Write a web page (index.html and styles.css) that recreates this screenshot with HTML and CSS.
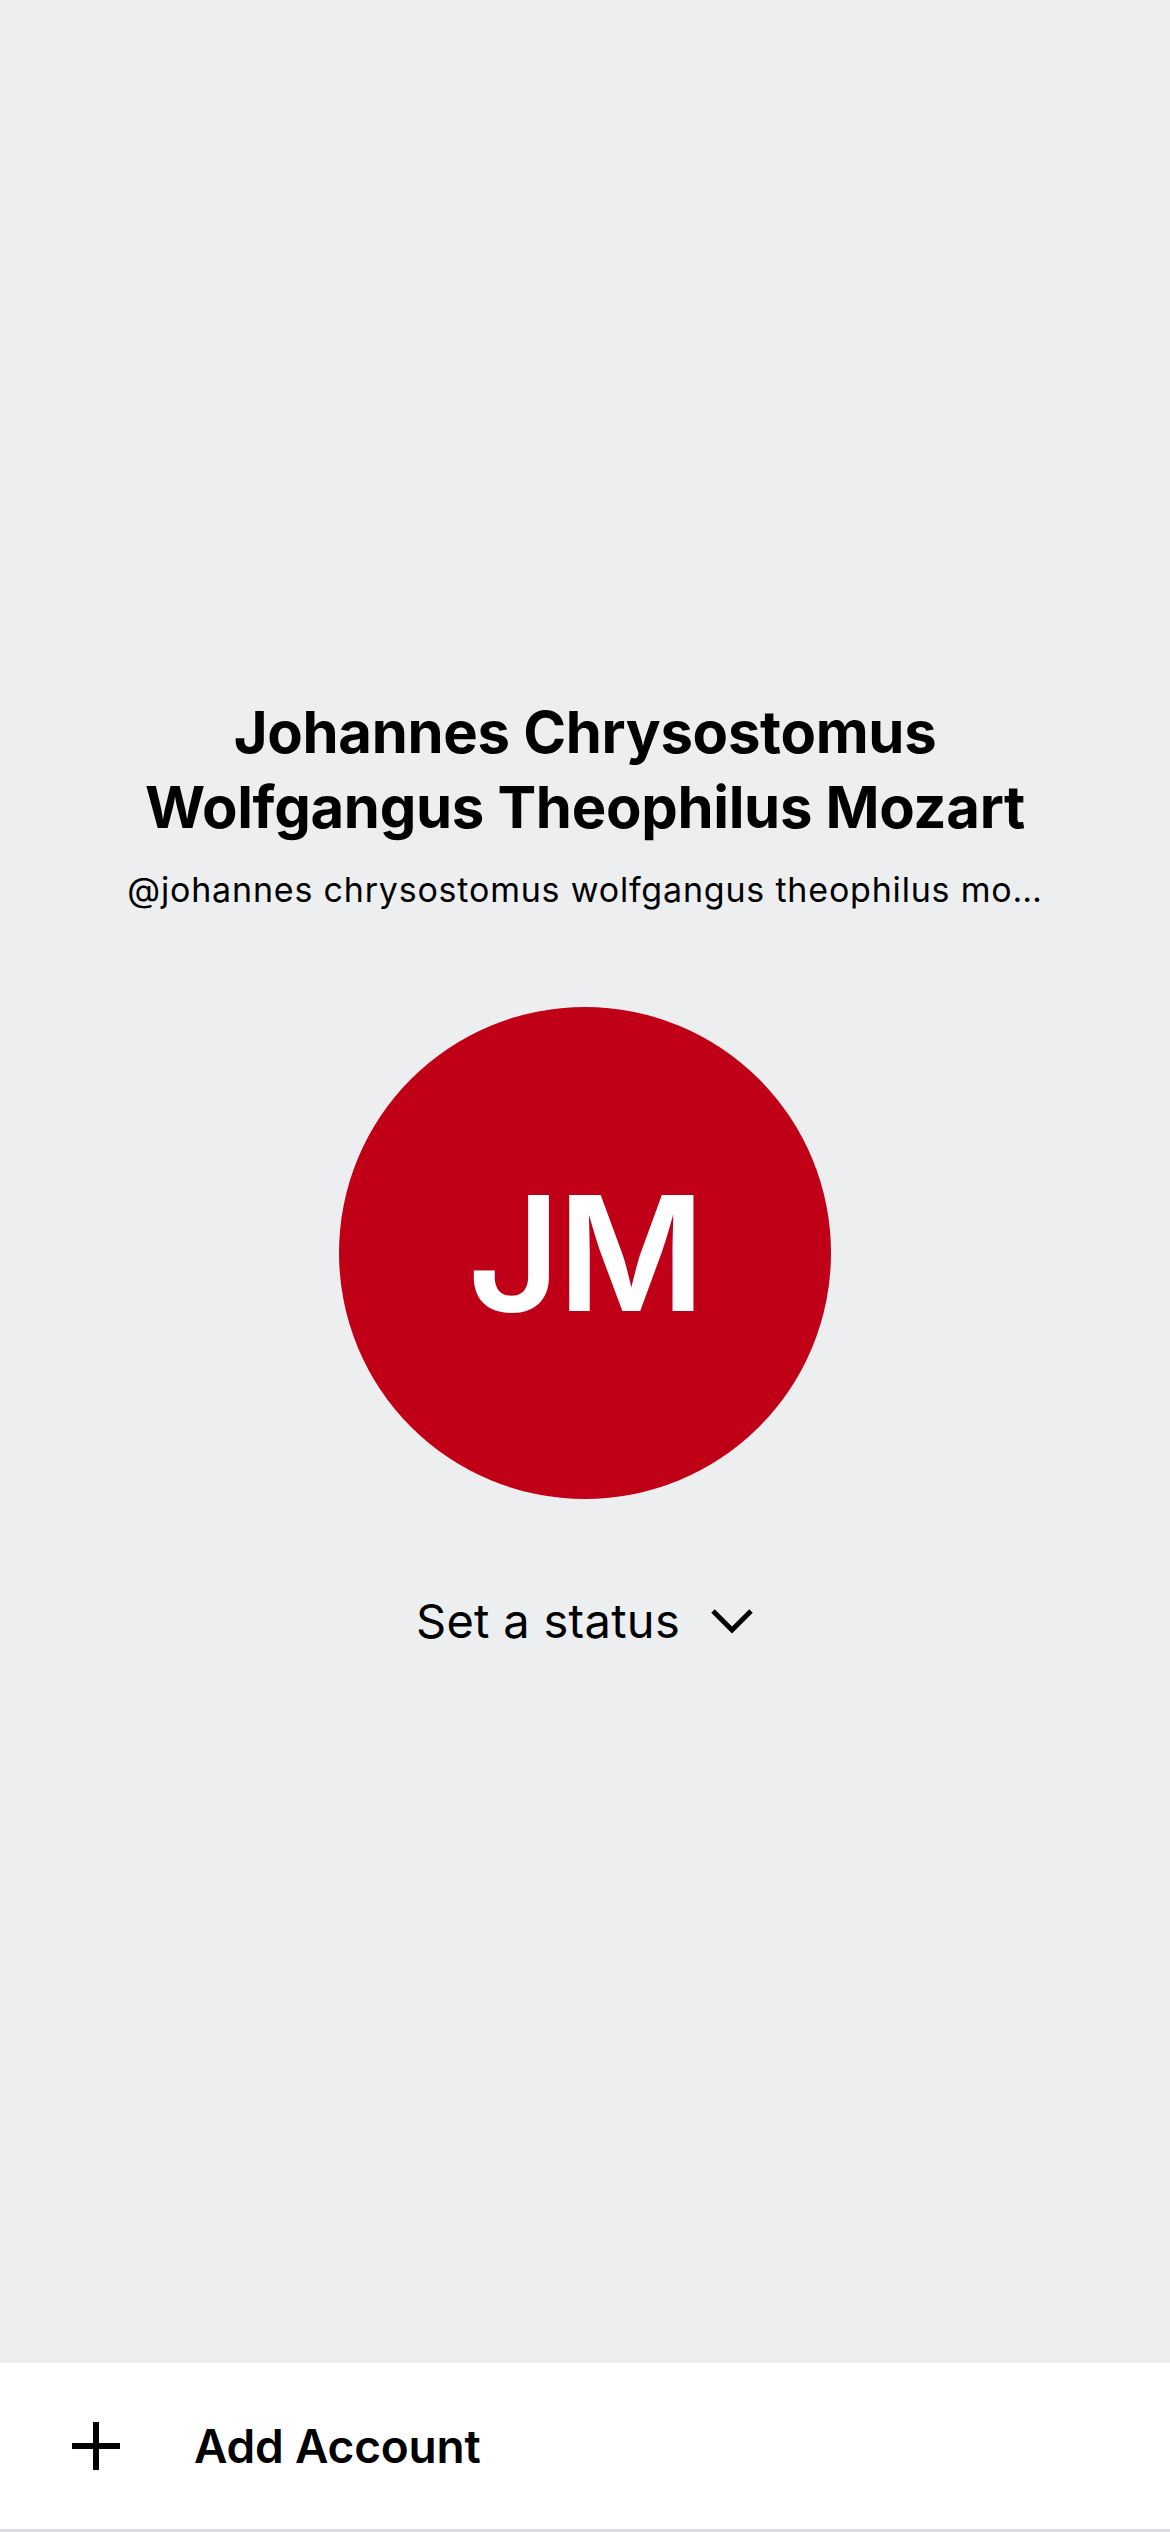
FILE: index.html
```html
<!DOCTYPE html>
<html lang="en">
<head>
<meta charset="utf-8">
<title>Account</title>
<link rel="stylesheet" href="styles.css">
</head>
<body>
<div class="screen">
  <main class="main">
    <h1 class="name">Johannes Chrysostomus<br>Wolfgangus Theophilus Mozart</h1>
    <p class="handle">@johannes chrysostomus wolfgangus theophilus mo…</p>
    <div class="avatar"><span class="initials">JM</span></div>
    <button class="status" type="button">
      <span class="status-text">Set a status</span>
      <svg class="chevron" width="44" height="27" viewBox="0 0 44 27" aria-hidden="true">
        <path d="M3 3 L22 22 L41 3" fill="none" stroke="#000" stroke-width="5" stroke-linecap="butt" stroke-linejoin="miter"/>
      </svg>
    </button>
  </main>
  <div class="account-bar">
    <svg class="plus" width="48" height="48" viewBox="0 0 48 48" aria-hidden="true">
      <path d="M24 0 V48 M0 24 H48" stroke="#000" stroke-width="6"/>
    </svg>
    <span class="add-label">Add Account</span>
  </div>
</div>
</body>
</html>
```

FILE: styles.css
```css
* { box-sizing: border-box; }
html, body {
  margin: 0;
  padding: 0;
}
body {
  background: #edeef0;
  font-family: Inter, "Noto Sans", "Liberation Sans", sans-serif;
  color: #000;
}
.screen {
  width: 1170px;
  height: 2532px;
  display: flex;
  flex-direction: column;
}
.main {
  flex: 1;
  display: flex;
  flex-direction: column;
  align-items: center;
  padding-top: 695px;
}
.name {
  margin: 0;
  font-size: 58px;
  line-height: 75px;
  font-weight: 700;
  text-align: center;
  letter-spacing: -0.3px;
}
.handle {
  margin: 25px 0 0;
  font-size: 34px;
  line-height: 40px;
  font-weight: 400;
  letter-spacing: 0.8px;
  white-space: nowrap;
}
.avatar {
  margin-top: 97px;
  width: 492px;
  height: 492px;
  border-radius: 50%;
  background: #c00017;
  display: flex;
  align-items: center;
  justify-content: center;
}
.initials {
  color: #fff;
  font-size: 160px;
  line-height: 1;
  font-weight: 600;
  letter-spacing: -3px;
}
.status {
  margin-top: 94px;
  display: flex;
  align-items: center;
  gap: 30px;
  background: none;
  border: 0;
  padding: 0;
  font-family: inherit;
  color: #000;
}
.status-text {
  font-size: 47px;
  line-height: 56px;
  font-weight: 400;
  letter-spacing: 0.3px;
}
.chevron { display: block; }
.account-bar {
  height: 169px;
  background: #fff;
  border-bottom: 3px solid #dcdde0;
  display: flex;
  align-items: center;
  padding-left: 72px;
  gap: 74px;
}
.plus { display: block; }
.add-label {
  font-size: 46px;
  font-weight: 600;
  line-height: 56px;
  letter-spacing: -0.2px;
}
```
